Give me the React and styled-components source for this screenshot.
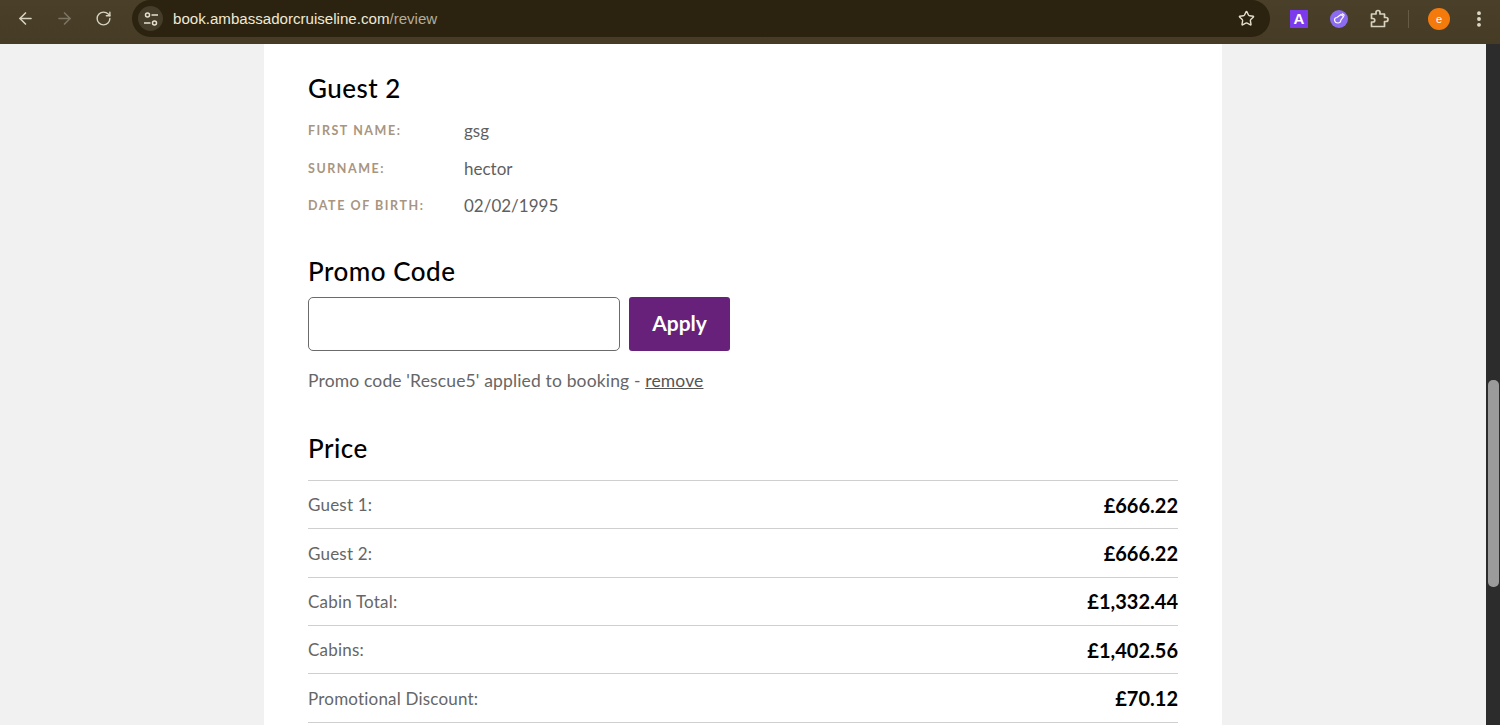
import React from 'react'
import styled, { createGlobalStyle } from 'styled-components'
import { ArrowLeft, ArrowRight, RotateCw, Star, EllipsisVertical } from 'lucide-react'

const Global = createGlobalStyle`
  html, body {
    height: 725px;
    margin: 0;
    overflow: hidden;
  }

  body {
    background: #f1f1f1;
    font-family: Lato, "Open Sans", sans-serif;
  }
`

const Screen = styled.div`
  display: flex;
  flex-direction: column;
  height: 725px;
  width: 1500px;
`

const Toolbar = styled.header`
  align-items: flex-start;
  background: linear-gradient(#4a3f28, #463c25);
  box-sizing: border-box;
  display: flex;
  flex: 0 0 44px;
  height: 44px;
  padding-left: 13px;
`

const NavButton = styled.span`
  align-items: center;
  color: ${p => (p.$off ? '#7d7563' : '#d8d2c0')};
  display: flex;
  height: 37px;
  justify-content: center;
  margin-right: 15px;
  width: 24px;
`

const Omnibox = styled.div`
  align-items: center;
  background: #2b230f;
  border-radius: 19px;
  box-sizing: border-box;
  display: flex;
  height: 37px;
  margin-left: 2px;
  padding: 0 15px 0 6px;
  width: 1138px;
`

const SiteChip = styled.span`
  align-items: center;
  background: #453c29;
  border-radius: 50%;
  color: #e6e0cf;
  display: flex;
  flex: 0 0 25px;
  height: 25px;
  justify-content: center;
`

const Url = styled.span`
  color: #efe9d6;
  font-family: "Liberation Sans", sans-serif;
  font-size: 15.1px;
  margin-left: 10px;

  em {
    color: #b3ad9c;
    font-style: normal;
  }
`

const StarIcon = styled(Star)`
  color: #e3ddcc;
  margin-left: auto;
`

const Extensions = styled.div`
  align-items: center;
  display: flex;
  height: 37px;
  margin-left: 20px;
`

const ExtA = styled.span`
  align-items: center;
  background: #7c3aed;
  color: #fff;
  display: flex;
  font-family: "Liberation Sans", sans-serif;
  font-size: 15px;
  font-weight: 700;
  height: 18px;
  justify-content: center;
  width: 18px;
`

const ExtRound = styled.span`
  align-items: center;
  background: #8b6cf0;
  border-radius: 50%;
  display: flex;
  height: 18px;
  justify-content: center;
  margin-left: 22px;
  width: 18px;
`

const PuzzleIcon = styled.svg`
  color: #d8d2c0;
  margin-left: 21px;
`

const Divider = styled.span`
  background: #665c45;
  height: 18px;
  margin-left: 19px;
  width: 1px;
`

const Avatar = styled.span`
  align-items: center;
  background: #f47a0c;
  border-radius: 50%;
  color: #fff;
  display: flex;
  font-family: "Liberation Sans", sans-serif;
  font-size: 11px;
  height: 22px;
  justify-content: center;
  margin-left: 19px;
  width: 22px;
`

const MenuIcon = styled(EllipsisVertical)`
  color: #e3ddcc;
  margin-left: 19px;
`

const Viewport = styled.div`
  display: flex;
  flex: 1;
  min-height: 0;
`

const Page = styled.main`
  display: flex;
  flex: 1;
  justify-content: flex-start;
  overflow: hidden;
  padding-left: 264px;
`

const Card = styled.section`
  background: #fff;
  box-sizing: border-box;
  height: 900px;
  padding: 29px 44px 0;
  width: 958px;
`

const Heading = styled.h2`
  color: #000;
  font-size: 26px;
  font-weight: 500;
  letter-spacing: 0.5px;
  line-height: 30px;
  margin: 0;
`

const Details = styled.dl`
  margin: 9px 0 0;
`

const DetailRow = styled.div`
  align-items: center;
  display: flex;
  height: 37.4px;
`

const Label = styled.dt`
  color: #a8957f;
  font-size: 12.5px;
  font-weight: 700;
  letter-spacing: 1.55px;
  width: 156px;
`

const Value = styled.dd`
  color: #5f5f5f;
  font-size: 17px;
  margin: 0;
`

const PromoHeading = styled(Heading)`
  margin-top: 32px;
`

const PromoForm = styled.div`
  display: flex;
  gap: 9px;
  margin-top: 11px;
`

const PromoInput = styled.input`
  background: #fff;
  border: 1px solid #6b6b6b;
  border-radius: 5px;
  box-sizing: border-box;
  height: 54px;
  width: 312px;
`

const ApplyButton = styled.button`
  background: #68217a;
  border: 0;
  border-radius: 3px;
  color: #fff;
  font-family: inherit;
  font-size: 21px;
  font-weight: 700;
  height: 54px;
  padding: 0 0 3px;
  width: 101px;
`

const PromoNote = styled.p`
  color: #666;
  font-size: 17.5px;
  letter-spacing: 0.15px;
  line-height: 22px;
  margin: 19px 0 0;

  a {
    color: #555;
    text-decoration: underline;
  }
`

const PriceHeading = styled(Heading)`
  margin-top: 41px;
`

const PriceTable = styled.div`
  border-top: 1px solid #cfcfcf;
  margin-top: 17px;
`

const PriceRow = styled.div`
  align-items: center;
  border-bottom: 1px solid #cfcfcf;
  box-sizing: border-box;
  display: flex;
  height: 48.3px;
  justify-content: space-between;
`

const PriceLabel = styled.span`
  color: #666;
  font-size: 17px;
  letter-spacing: 0.2px;
`

const PriceValue = styled.span`
  color: #000;
  font-size: 20px;
  font-weight: 700;
`

const Scrollbar = styled.aside`
  background: #2c2c2c;
  box-sizing: border-box;
  flex: 0 0 14px;
  padding: 336px 1px 0 2px;
`

const Thumb = styled.div`
  background: #9b9b9b;
  border-radius: 5px;
  height: 207px;
`

const guest = [
  ['FIRST NAME:', 'gsg'],
  ['SURNAME:', 'hector'],
  ['DATE OF BIRTH:', '02/02/1995'],
]

const prices = [
  ['Guest 1:', '£666.22'],
  ['Guest 2:', '£666.22'],
  ['Cabin Total:', '£1,332.44'],
  ['Cabins:', '£1,402.56'],
  ['Promotional Discount:', '£70.12'],
]

export default function App() {
  return (
    <Screen>
      <Global />
      <Toolbar>
        <NavButton><ArrowLeft size={19} /></NavButton>
        <NavButton $off><ArrowRight size={19} /></NavButton>
        <NavButton><RotateCw size={17} /></NavButton>
        <Omnibox>
          <SiteChip>
            <svg width="16" height="16" viewBox="0 0 16 16" fill="none" stroke="currentColor" strokeWidth="1.5">
              <circle cx="4.5" cy="4" r="2" />
              <path d="M8.5 4 H15" />
              <path d="M1 12 H7.5" />
              <circle cx="11.5" cy="12" r="2" />
            </svg>
          </SiteChip>
          <Url>book.ambassadorcruiseline.com<em>/review</em></Url>
          <StarIcon size={17} />
        </Omnibox>
        <Extensions>
          <ExtA>A</ExtA>
          <ExtRound>
            <svg width="13" height="13" viewBox="0 0 13 13" fill="none" stroke="#fff" strokeWidth="1.2">
              <path d="M1.5 8 Q1.5 5.5 4 5.5 L8 2.5 L10.5 4.5 L8 8 Q7.5 11 5 11 Q2 11 1.5 8 Z" />
              <path d="M9 1.5 L11.5 3.5" />
            </svg>
          </ExtRound>
          <PuzzleIcon width="20" height="20" viewBox="0 0 20 20" fill="none" stroke="currentColor" strokeWidth="1.7" strokeLinejoin="round">
            <path d="M2.5 5 H7 V3.5 A2 2 0 0 1 11 3.5 V5 H15.5 V8.5 H17 A2 2 0 0 1 17 12.5 H15.5 V17.5 H2.5 V13 H4 A1.7 1.7 0 0 0 4 9.5 H2.5 Z" />
          </PuzzleIcon>
          <Divider />
          <Avatar>e</Avatar>
          <MenuIcon size={20} strokeWidth={2.6} />
        </Extensions>
      </Toolbar>
      <Viewport>
        <Page>
          <Card>
            <Heading>Guest 2</Heading>
            <Details>
              {guest.map(([label, value]) => (
                <DetailRow key={label}>
                  <Label>{label}</Label>
                  <Value>{value}</Value>
                </DetailRow>
              ))}
            </Details>
            <PromoHeading>Promo Code</PromoHeading>
            <PromoForm>
              <PromoInput />
              <ApplyButton>Apply</ApplyButton>
            </PromoForm>
            <PromoNote>Promo code 'Rescue5' applied to booking - <a href="#remove">remove</a></PromoNote>
            <PriceHeading>Price</PriceHeading>
            <PriceTable>
              {prices.map(([label, value]) => (
                <PriceRow key={label}>
                  <PriceLabel>{label}</PriceLabel>
                  <PriceValue>{value}</PriceValue>
                </PriceRow>
              ))}
            </PriceTable>
          </Card>
        </Page>
        <Scrollbar><Thumb /></Scrollbar>
      </Viewport>
    </Screen>
  )
}
